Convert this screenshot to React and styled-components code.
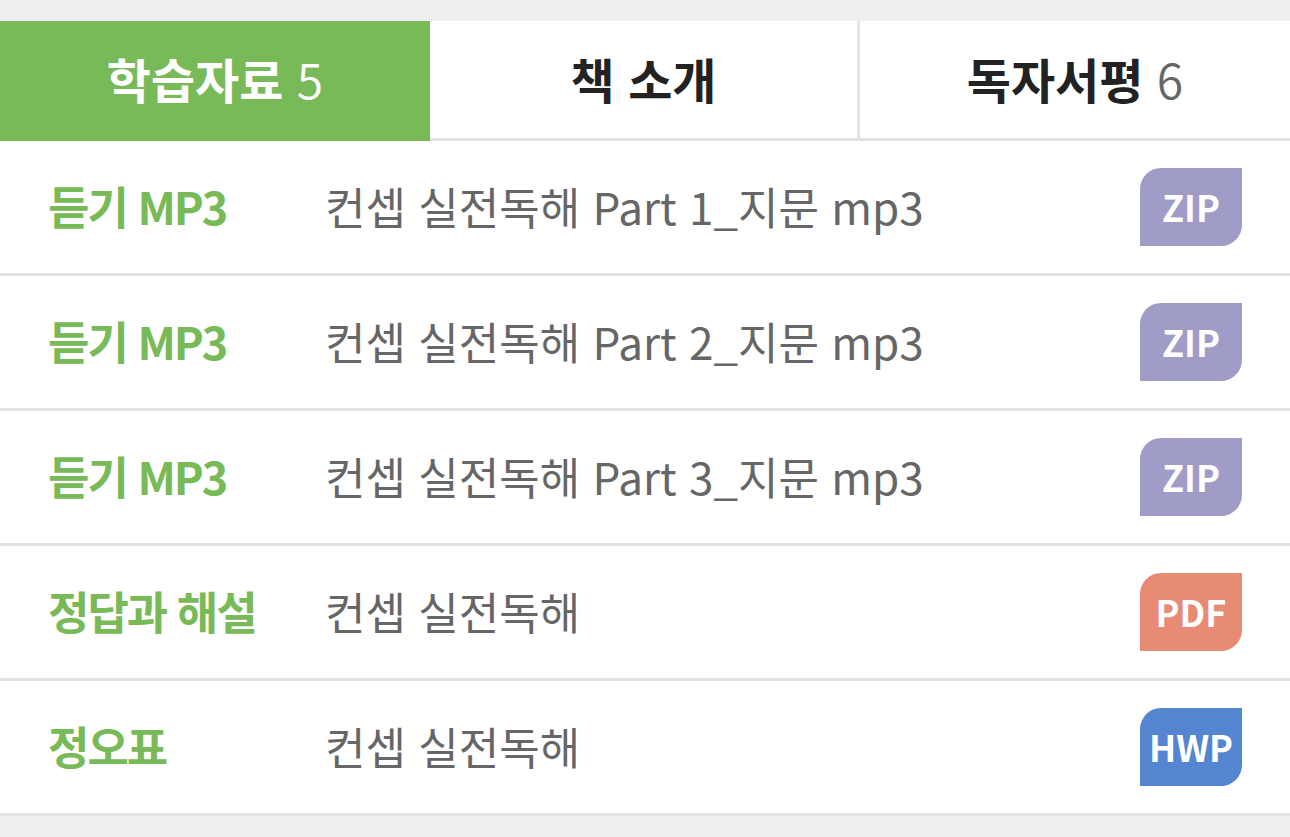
import { useState } from "react";
import styled, { createGlobalStyle } from "styled-components";

const GlobalStyle = createGlobalStyle`
    * {
        box-sizing: border-box;
    }

    body {
        margin: 0;
        background-color: #eee;
        font-family: "Noto Sans CJK KR", sans-serif;
    }
`;

const Page = styled.main`
    padding: 21px 0px;
`;

const TabBar = styled.div`
    display: grid;
    grid-template-columns: repeat(3, 1fr);
    height: 120px;
    background-color: #fff;
`;

const Tab = styled.button`
    padding: 0px 0px 4px;
    border: 0px solid ${props => props.$active ? "#78b958" : "#e2e2e2"};
    border-bottom-width: 3px;
    background-color: ${props => props.$active ? "#78b958" : "#fff"};
    color: ${props => props.$active ? "#fff" : "#222"};
    font-family: inherit;
    font-size: 48px;
    font-weight: 700;
    line-height: 60px;
    cursor: pointer;

    &:not(:last-child) {
        border-right-width: ${props => props.$active ? 0 : 3}px;
    }
`;

const Count = styled.span`
    color: ${props => props.$active ? "#fff" : "#666"};
    font-weight: 350;
`;

const List = styled.ul`
    margin: 0px;
    padding: 0px;
    background-color: #fff;
    list-style: none;
`;

const Row = styled.li`
    display: grid;
    grid-template-columns: 277px 1fr auto;
    align-items: center;
    height: 135px;
    padding: 0px 48px;
    border-bottom: 3px solid #e2e2e2;
    font-size: 45px;
    line-height: 66px;
`;

const Category = styled.strong`
    padding-bottom: 2px;
    color: #78b958;
    font-weight: 700;
    letter-spacing: -2px;
`;

const Title = styled.span`
    padding-bottom: 2px;
    color: #666;
    font-size: 44px;
`;

const typeColors = {
    ZIP: "#9f9cc8",
    PDF: "#e78b74",
    HWP: "#5485d0"
};

const Download = styled.a`
    display: flex;
    align-items: center;
    justify-content: center;
    width: 102px;
    height: 78px;
    padding-bottom: 2px;
    border-radius: 21px 0px;
    background-color: ${props => typeColors[props.$type]};
    color: #fff;
    font-size: 36px;
    font-weight: 700;
    text-decoration: none;
`;

const tabs = [
    { name: "학습자료", count: 5 },
    { name: "책 소개" },
    { name: "독자서평", count: 6 }
];

const files = [
    { category: "듣기 MP3", title: "컨셉 실전독해 Part 1_지문 mp3", type: "ZIP" },
    { category: "듣기 MP3", title: "컨셉 실전독해 Part 2_지문 mp3", type: "ZIP" },
    { category: "듣기 MP3", title: "컨셉 실전독해 Part 3_지문 mp3", type: "ZIP" },
    { category: "정답과 해설", title: "컨셉 실전독해", type: "PDF" },
    { category: "정오표", title: "컨셉 실전독해", type: "HWP" }
];

export default function App() {
    const [active, setActive] = useState(0);

    return (
        <Page lang="ko">
            <GlobalStyle />
            <TabBar role="tablist">
                {tabs.map((tab, i) => (
                    <Tab
                        key={tab.name}
                        type="button"
                        role="tab"
                        aria-selected={i === active}
                        $active={i === active}
                        onClick={() => setActive(i)}
                    >
                        {tab.name}
                        {tab.count && <Count $active={i === active}> {tab.count}</Count>}
                    </Tab>
                ))}
            </TabBar>
            <List>
                {files.map((file, i) => (
                    <Row key={i}>
                        <Category>{file.category}</Category>
                        <Title>{file.title}</Title>
                        <Download href="#" $type={file.type}>{file.type}</Download>
                    </Row>
                ))}
            </List>
        </Page>
    );
}
